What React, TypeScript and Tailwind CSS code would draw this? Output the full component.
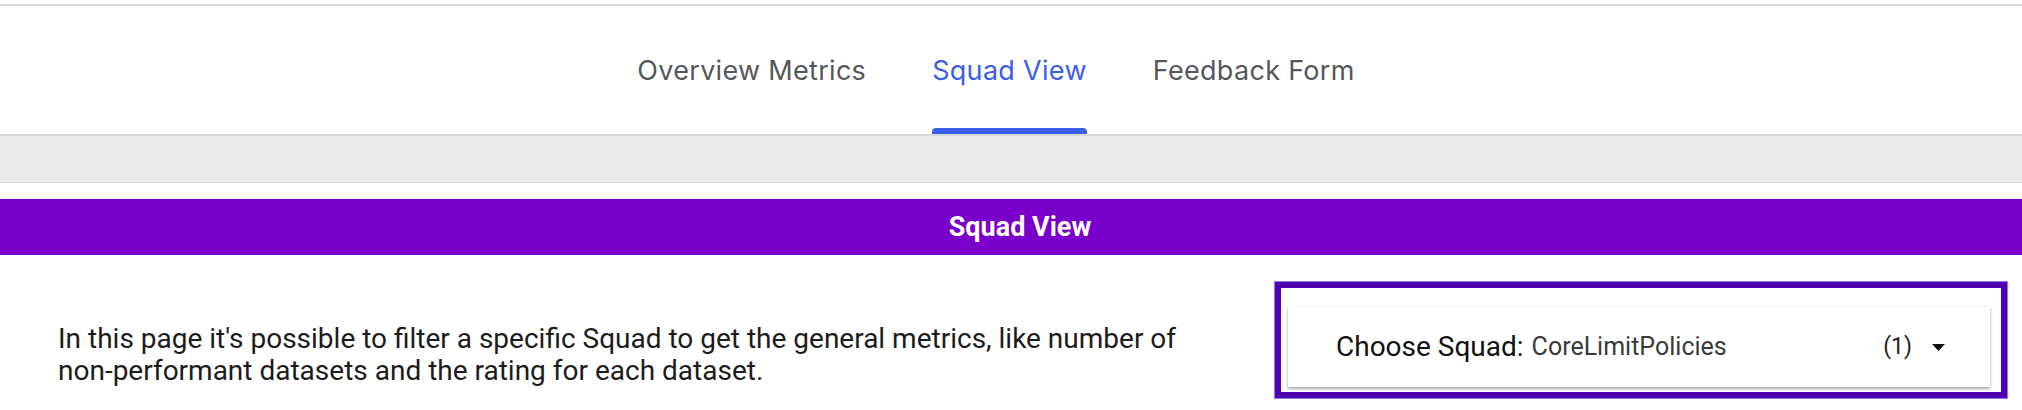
import { useState } from "react";

const tabs = ["Overview Metrics", "Squad View", "Feedback Form"];

export default function App() {
  const [active, setActive] = useState("Squad View");

  return (
    <div className="min-h-screen bg-white font-['Roboto',sans-serif]">
      {/* top rule */}
      <div className="h-[4px]" />
      <div className="h-[2px] bg-[#dadadc]" />

      {/* tab bar */}
      <nav className="flex h-[128px] justify-center pr-[30px] font-['Inter',sans-serif]">
        {tabs.map((t) => {
          const on = t === active;
          return (
            <button
              key={t}
              type="button"
              onClick={() => setActive(t)}
              className="flex flex-col px-[33px]"
            >
              <span
                className={`flex flex-1 items-center pt-[8px] text-[27px] font-normal tracking-[0.3px] ${
                  on ? "text-[#3b5de7]" : "text-[#54575c]"
                }`}
              >
                {t}
              </span>
              <span className={`h-[6px] w-full rounded-t-[4px] ${on ? "bg-[#3b5de7]" : "bg-transparent"}`} />
            </button>
          );
        })}
      </nav>
      <div className="h-[2px] bg-[#d8d8db]" />

      {/* gray band */}
      <div className="h-[47px] border-b border-[#d6d6d6] bg-[#eaeaea]" />
      <div className="h-[16px]" />

      {/* section header */}
      <header className="flex h-[56px] items-center justify-center bg-[#7a00cb] pl-[18px] text-[27px] font-bold text-white">
        Squad View
      </header>

      {/* content */}
      <section className="flex items-start justify-between pt-[27px]">
        <p className="mt-[41px] pl-[58px] text-[28px] leading-[32px] text-[#1c1c1c]">
          In this page it's possible to filter a specific Squad to get the general metrics, like number of
          <br />
          non-performant datasets and the rating for each dataset.
        </p>

        <div className="mr-[15px] h-[116px] w-[732px] shrink-0 border-[6px] border-[#5000b3] pt-[19px] pr-[11px] pb-[5px] pl-[7px] ring-1 ring-[#9a7fd8]">
          <button
            type="button"
            className="flex h-[80px] w-full items-center bg-white pr-[45px] pl-[48px] shadow-[0_2px_3px_rgba(0,0,0,0.3),0_0_2px_rgba(0,0,0,0.12)]"
          >
            <span className="text-[28px] text-[#111]">Choose Squad:</span>
            <span className="ml-[8px] text-[25px] text-[#3a3a3a]">CoreLimitPolicies</span>
            <span className="ml-auto text-[23px] text-[#222]">(1)</span>
            <svg className="ml-[20px]" width="13" height="7" viewBox="0 0 13 7">
              <path d="M0 0h13L6.5 7z" fill="#111" />
            </svg>
          </button>
        </div>
      </section>
    </div>
  );
}
